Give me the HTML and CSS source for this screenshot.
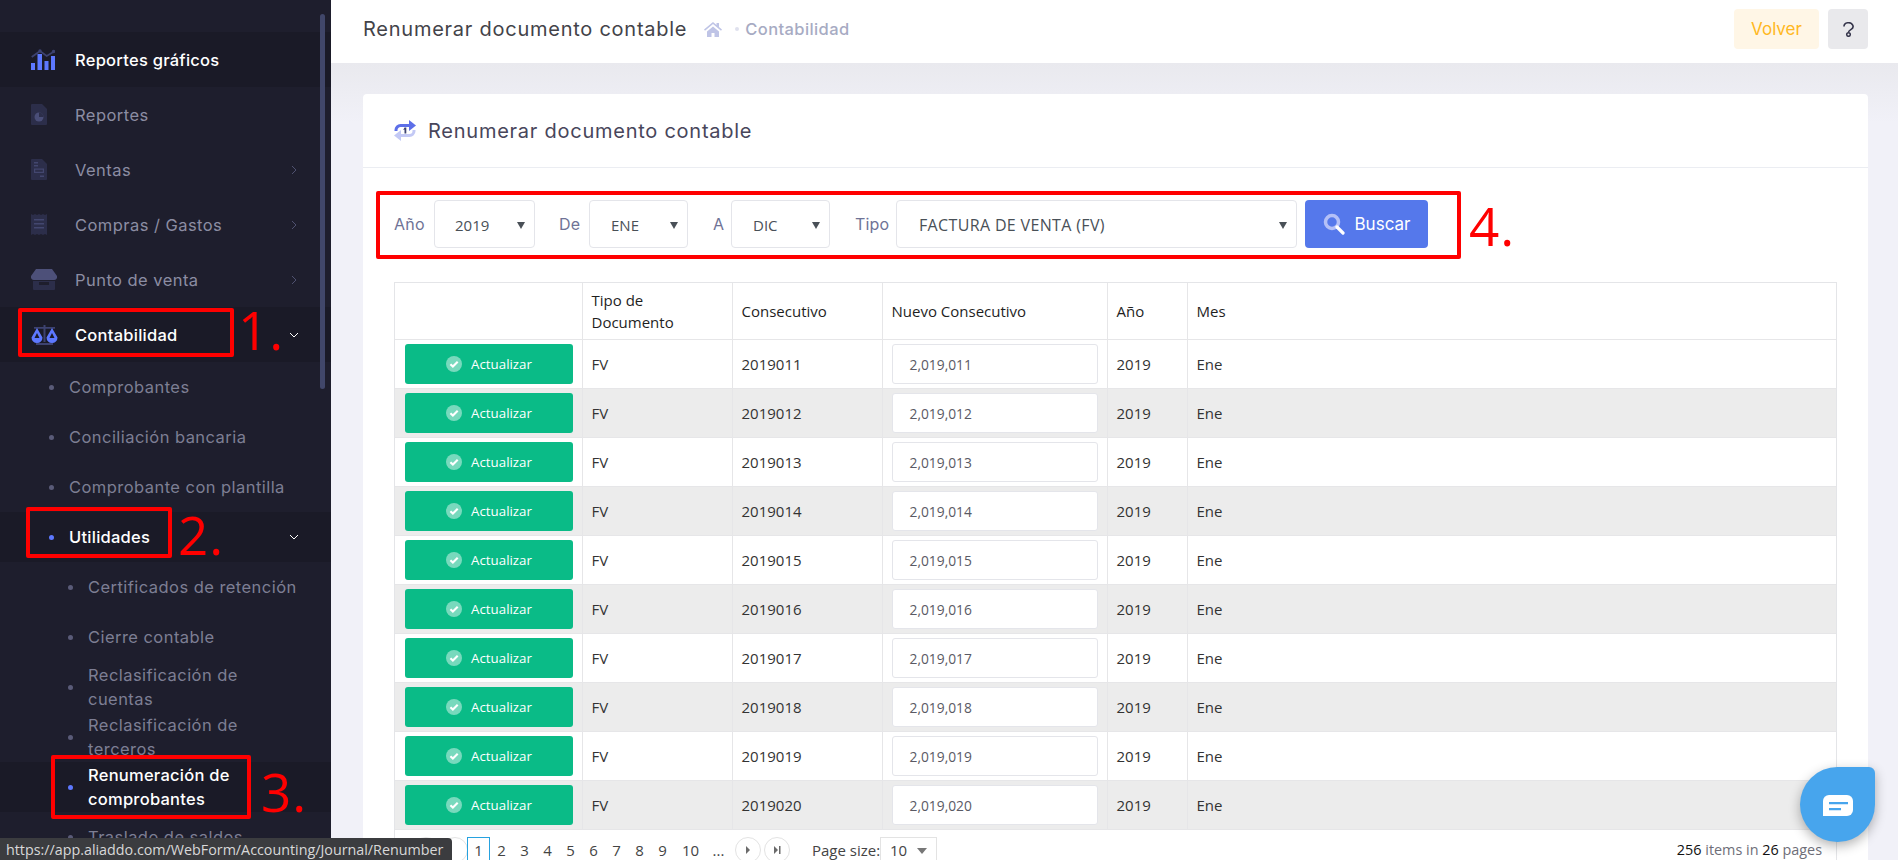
FILE: index.html
```html
<!DOCTYPE html>
<html lang="es">
<head>
<meta charset="utf-8">
<title>Renumerar documento contable</title>
<link rel="stylesheet" href="styles.css">
</head>
<body>
<svg class="sprites" width="0" height="0" aria-hidden="true">
  <symbol id="chev-r" viewBox="0 0 10 10"><path d="M3 1l4 4-4 4" fill="none" stroke="currentColor" stroke-width="1"/></symbol>
  <symbol id="chev-d" viewBox="0 0 10 10"><path d="M1 3l4 4 4-4" fill="none" stroke="currentColor" stroke-width="1"/></symbol>
  <symbol id="check" viewBox="0 0 16 16"><circle cx="8" cy="8" r="8" fill="#fff" fill-opacity=".45"/><path d="M4.400 8.200l2.500 2.400 4.800-4.800" fill="none" stroke="#fff" stroke-width="2.100"/></symbol>
</svg>
<div class="app">
  <aside class="sidebar">
    <div class="thumb"></div>
    <nav class="menu">
      <a class="item active">
        <span class="ico"><svg width="24" height="21" viewBox="0 0 24 21"><path d="M.7 8L9 2l6.700 5L24 2" fill="none" stroke="#3d4270" stroke-width="1.800"/><circle cx="9" cy="2" r="1.700" fill="#3d4270"/><circle cx="22.500" cy="2.500" r="1.700" fill="#3d4270"/><path d="M0 14h4v7H0zM6.500 5h4.500v16H6.500zM13.500 12h4v9h-4zM20 7h4v14h-4z" fill="#5d78ff"/></svg></span>
        <span class="lbl">Reportes gráficos</span>
      </a>
      <a class="item">
        <span class="ico"><svg width="16" height="21" viewBox="0 0 16 21"><path d="M1 0h10l5 5v15a1 1 0 0 1-1 1H1a1 1 0 0 1-1-1V1a1 1 0 0 1 1-1z" fill="#2c2e4a"/><circle cx="8" cy="13" r="4.500" fill="#4a4e78"/><path d="M8 13V8.500A4.500 4.500 0 0 1 12.500 13z" fill="#2c2e4a"/></svg></span>
        <span class="lbl">Reportes</span>
      </a>
      <a class="item">
        <span class="ico"><svg width="16" height="21" viewBox="0 0 16 21"><path d="M1 0h10l5 5v15a1 1 0 0 1-1 1H1a1 1 0 0 1-1-1V1a1 1 0 0 1 1-1z" fill="#2c2e4a"/><path d="M3 3h4v1.500H3zM3 6h4v1.500H3zM3 9.500h10v4.500H3zM9 16.500h4V18H9z" fill="#43476f"/><path d="M4.200 10.700h7.600v2.100H4.200z" fill="#2c2e4a"/></svg></span>
        <span class="lbl">Ventas</span>
        <svg class="chev dim" width="10" height="10"><use href="#chev-r"/></svg>
      </a>
      <a class="item">
        <span class="ico"><svg width="16" height="21" viewBox="0 0 16 21"><path d="M0 0l2 1 2-1 2 1 2-1 2 1 2-1 2 1 2-1v21l-2-1-2 1-2-1-2 1-2-1-2 1-2-1-2 1z" fill="#2c2e4a"/><path d="M3 5h10v1.400H3zM3 9h10v1.400H3zM3 13h10v1.400H3z" fill="#43476f"/></svg></span>
        <span class="lbl">Compras / Gastos</span>
        <svg class="chev dim" width="10" height="10"><use href="#chev-r"/></svg>
      </a>
      <a class="item">
        <span class="ico"><svg width="26" height="21" viewBox="0 0 26 21"><path d="M5 0h16l5 7v2a3 3 0 0 1-3 2H3a3 3 0 0 1-3-2V7z" fill="#4d5079"/><path d="M2 12h22v8a1 1 0 0 1-1 1H3a1 1 0 0 1-1-1zM8 13v3h10v-3z" fill="#2c2e4a" fill-rule="evenodd"/></svg></span>
        <span class="lbl">Punto de venta</span>
        <svg class="chev dim" width="10" height="10"><use href="#chev-r"/></svg>
      </a>
      <a class="item active">
        <span class="ico"><svg width="27" height="21" viewBox="0 0 27 21"><path d="M12.500 1h2v17h-2zM5 19h17v2H5zM3 3h21v1.800H3z" fill="#3d4270"/><path d="M6 4L.5 13.500a5.500 5.500 0 0 0 11 0zM6 9l-2.500 5h5z" fill="#5d78ff" fill-rule="evenodd"/><path d="M21 4l-5.500 9.500a5.500 5.500 0 0 0 11 0zM21 9l-2.500 5h5z" fill="#5d78ff" fill-rule="evenodd"/></svg></span>
        <span class="lbl">Contabilidad</span>
        <svg class="chev" width="10" height="10"><use href="#chev-d"/></svg>
      </a>
      <a class="sub"><i class="dot"></i><span>Comprobantes</span></a>
      <a class="sub"><i class="dot"></i><span>Conciliación bancaria</span></a>
      <a class="sub"><i class="dot"></i><span>Comprobante con plantilla</span></a>
      <a class="sub active"><i class="dot"></i><span>Utilidades</span><svg class="chev" width="10" height="10"><use href="#chev-d"/></svg></a>
      <a class="subsub"><i class="dot"></i><span>Certificados de retención</span></a>
      <a class="subsub"><i class="dot"></i><span>Cierre contable</span></a>
      <a class="subsub"><i class="dot"></i><span>Reclasificación de<br>cuentas</span></a>
      <a class="subsub"><i class="dot"></i><span>Reclasificación de<br>terceros</span></a>
      <a class="subsub active"><i class="dot"></i><span>Renumeración de<br>comprobantes</span></a>
      <a class="subsub"><i class="dot"></i><span>Traslado de saldos</span></a>
    </nav>
  </aside>

  <main class="main">
    <header class="topbar">
      <div class="crumbs">
        <h1 class="page-title">Renumerar documento contable</h1>
        <svg class="home" width="18" height="15" viewBox="0 0 18 15"><path d="M9 0L0 7.500l1 1.200L9 2l8 6.700 1-1.200-3-2.500V1h-2.500v2zM3 9.500V15h4.500v-4h3v4H15V9.500L9 4.500z" fill="#bfc4e6"/></svg>
        <i class="crumb-dot"></i>
        <span class="crumb">Contabilidad</span>
      </div>
      <div class="actions">
        <button class="btn-back">Volver</button>
        <button class="btn-help"><svg width="11" height="15" viewBox="0 0 11 15"><path d="M1 4.500a4.500 3.700 0 1 1 6.800 3.100C6.300 8.500 5.500 9 5.500 10.300" fill="none" stroke="#34344a" stroke-width="1.600"/><circle cx="5.500" cy="12.500" r="1.800" fill="none" stroke="#34344a" stroke-width="1.500"/></svg></button>
      </div>
    </header>

    <section class="content">
      <div class="card">
        <div class="card-head">
          <svg width="22" height="21" viewBox="0 0 22 21"><path d="M2 11V10a4.500 4.500 0 0 1 4.500-4.500H16" fill="none" stroke="#5d6fe8" stroke-width="3"/><path d="M15 0l7 5.500L15 11z" fill="#5d6fe8"/><path d="M20 10v1a4.500 4.500 0 0 1-4.500 4.500H6" fill="none" stroke="#c3c9f5" stroke-width="3"/><path d="M7 10l-7 5.500L7 21z" fill="#c3c9f5"/><path d="M10.500 7.500h1.800v6h-1.800V9.500l-1.300.6z" fill="#3d4270"/></svg>
          <h2 class="card-title">Renumerar documento contable</h2>
        </div>
        <div class="card-body">
          <div class="filters">
            <label class="flabel w-ano">Año</label>
            <div class="select s-ano"><span>2019</span><i class="tri"></i></div>
            <label class="flabel w-de">De</label>
            <div class="select s-mes"><span>ENE</span><i class="tri"></i></div>
            <label class="flabel w-a">A</label>
            <div class="select s-mes2"><span>DIC</span><i class="tri"></i></div>
            <label class="flabel w-tipo">Tipo</label>
            <div class="select s-tipo"><span>FACTURA DE VENTA (FV)</span><i class="tri"></i></div>
            <button class="btn-search"><svg width="22" height="22" viewBox="0 0 22 22"><circle cx="9" cy="9" r="6.500" fill="none" stroke="#b4c0f7" stroke-width="3.500"/><path d="M14 14l6 6" stroke="#fff" stroke-width="3.200" stroke-linecap="round"/></svg><span>Buscar</span></button>
          </div>
          <div class="grid-wrap">
            <table class="grid">
              <colgroup><col class="c1"><col class="c2"><col class="c3"><col class="c4"><col class="c5"><col></colgroup>
              <thead><tr><th></th><th>Tipo de Documento</th><th>Consecutivo</th><th>Nuevo Consecutivo</th><th>Año</th><th>Mes</th></tr></thead>
              <tbody>
                <tr><td class="act"><button class="btn-up"><svg width="16" height="16"><use href="#check"/></svg>Actualizar</button></td><td>FV</td><td>2019011</td><td class="inp"><div class="num">2,019,011</div></td><td>2019</td><td>Ene</td></tr>
                <tr><td class="act"><button class="btn-up"><svg width="16" height="16"><use href="#check"/></svg>Actualizar</button></td><td>FV</td><td>2019012</td><td class="inp"><div class="num">2,019,012</div></td><td>2019</td><td>Ene</td></tr>
                <tr><td class="act"><button class="btn-up"><svg width="16" height="16"><use href="#check"/></svg>Actualizar</button></td><td>FV</td><td>2019013</td><td class="inp"><div class="num">2,019,013</div></td><td>2019</td><td>Ene</td></tr>
                <tr><td class="act"><button class="btn-up"><svg width="16" height="16"><use href="#check"/></svg>Actualizar</button></td><td>FV</td><td>2019014</td><td class="inp"><div class="num">2,019,014</div></td><td>2019</td><td>Ene</td></tr>
                <tr><td class="act"><button class="btn-up"><svg width="16" height="16"><use href="#check"/></svg>Actualizar</button></td><td>FV</td><td>2019015</td><td class="inp"><div class="num">2,019,015</div></td><td>2019</td><td>Ene</td></tr>
                <tr><td class="act"><button class="btn-up"><svg width="16" height="16"><use href="#check"/></svg>Actualizar</button></td><td>FV</td><td>2019016</td><td class="inp"><div class="num">2,019,016</div></td><td>2019</td><td>Ene</td></tr>
                <tr><td class="act"><button class="btn-up"><svg width="16" height="16"><use href="#check"/></svg>Actualizar</button></td><td>FV</td><td>2019017</td><td class="inp"><div class="num">2,019,017</div></td><td>2019</td><td>Ene</td></tr>
                <tr><td class="act"><button class="btn-up"><svg width="16" height="16"><use href="#check"/></svg>Actualizar</button></td><td>FV</td><td>2019018</td><td class="inp"><div class="num">2,019,018</div></td><td>2019</td><td>Ene</td></tr>
                <tr><td class="act"><button class="btn-up"><svg width="16" height="16"><use href="#check"/></svg>Actualizar</button></td><td>FV</td><td>2019019</td><td class="inp"><div class="num">2,019,019</div></td><td>2019</td><td>Ene</td></tr>
                <tr><td class="act"><button class="btn-up"><svg width="16" height="16"><use href="#check"/></svg>Actualizar</button></td><td>FV</td><td>2019020</td><td class="inp"><div class="num">2,019,020</div></td><td>2019</td><td>Ene</td></tr>
              </tbody>
            </table>
            <div class="pager">
              <span class="circle"></span><span class="circle"></span>
              <div class="pages">
                <span class="pg cur">1</span><span class="pg">2</span><span class="pg">3</span><span class="pg">4</span><span class="pg">5</span><span class="pg">6</span><span class="pg">7</span><span class="pg">8</span><span class="pg">9</span><span class="pg wide">10</span><span class="pg">...</span>
              </div>
              <span class="circle"><svg width="10" height="10" viewBox="0 0 10 10"><path d="M3 1l4 4-4 4z" fill="#6b6b6b"/></svg></span>
              <span class="circle"><svg width="10" height="10" viewBox="0 0 10 10"><path d="M2 1l4 4-4 4zM7 1h1.500v8H7z" fill="#6b6b6b"/></svg></span>
              <span class="psize">Page size:</span>
              <div class="psel"><span>10</span><i class="tri2"></i></div>
              <span class="pinfo"><b>256</b> items in <b>26</b> pages</span>
            </div>
          </div>
        </div>
      </div>
    </section>
  </main>

  <div class="mark m1"></div><span class="num-mark n1">1.</span>
  <div class="mark m2"></div><span class="num-mark n2">2.</span>
  <div class="mark m3"></div><span class="num-mark n3">3.</span>
  <div class="mark m4"></div><span class="num-mark n4">4.</span>

  <div class="status">https://app.aliaddo.com/WebForm/Accounting/Journal/Renumber</div>
  <div class="chat"><svg width="30" height="22" viewBox="0 0 30 22"><path d="M6 0h18a6 6 0 0 1 6 6v9a6 6 0 0 1-6 6H0V6a6 6 0 0 1 6-6z" fill="#fff"/><path d="M6 7h19v2.200H6zM6 13h12v2.200H6z" fill="#47a5ed"/></svg></div>
</div>
</body>
</html>
```

FILE: styles.css
```css
* { box-sizing: border-box; }
html, body { margin: 0; height: 100%; overflow: hidden; }
body { font-family: Inter, "Noto Sans", sans-serif; color: #48465b; }
.sprites { position: absolute; }
.app { position: relative; display: flex; width: 1898px; height: 860px; overflow: hidden; }
h1, h2 { margin: 0; font-weight: 400; }
button { font-family: inherit; border: 0; cursor: pointer; }

/* Sidebar */
.sidebar { position: relative; flex: 0 0 331px; height: 860px; background: #1e1e2d; overflow: hidden; padding-top: 32px; }
.thumb { position: absolute; left: 320px; top: 14px; width: 5px; height: 375px; border-radius: 3px; background: #41476a; }
.menu a { display: flex; align-items: center; }
.item { height: 55px; padding: 0 32px 0 31px; font-size: 16.500px; letter-spacing: .45px; color: #8c8da3; }
.ico { flex: 0 0 44px; display: flex; align-items: center; }
.lbl { flex: 1; }
.item.active { background: #1a1a27; color: #fff; font-weight: 500; letter-spacing: .25px; }
.chev { flex: none; color: #fff; }
.chev.dim { color: #4f5170; }
.sub, .subsub { height: 50px; line-height: 24px; font-size: 16.500px; letter-spacing: .45px; color: #7d7e94; white-space: nowrap; }
.sub { padding: 0 32px 0 49px; }
.sub span { flex: 1; }
.subsub { padding: 0 30px 0 68px; }
.dot { flex: none; width: 5px; height: 5px; border-radius: 50%; background: #5a5b78; margin-right: 15px; }
.sub.active, .subsub.active { background: #1a1a27; color: #fff; font-weight: 500; letter-spacing: .25px; }
.active .dot { background: #5d78ff; }

/* Main */
.main { flex: 1; min-width: 0; display: flex; flex-direction: column; background: #f1f1f8; }
.topbar { flex: 0 0 63px; display: flex; align-items: center; justify-content: space-between; padding: 0 30px 5px 32px; background: #fff; }
.crumbs { display: flex; align-items: center; }
.page-title { font-size: 20px; letter-spacing: .75px; color: #434349; margin-right: 17px; white-space: nowrap; }
.home { margin-right: 13px; }
.crumb-dot { width: 4px; height: 4px; border-radius: 50%; background: #dfe1ee; margin-right: 6px; }
.crumb { font-size: 16.500px; font-weight: 500; color: #a7abc3; letter-spacing: .4px; }
.actions { display: flex; gap: 9px; }
.btn-back { width: 85px; height: 40px; border-radius: 4px; background: #fff6e6; color: #ffb822; font-size: 17px; }
.btn-help { width: 40px; height: 40px; border-radius: 4px; background: #e9e9ec; display: flex; align-items: center; justify-content: center; }
.content { flex: 1; min-height: 0; padding: 31px 30px 0 32px; background: linear-gradient(#e9e9ee, #f1f1f8 60px); overflow: hidden; }
.card { height: 800px; background: #fff; border-radius: 4px; }
.card-head { height: 74px; display: flex; align-items: center; gap: 12px; padding-left: 31px; border-bottom: 1px solid #ebedf2; }
.card-title { font-size: 20px; letter-spacing: .75px; color: #48465b; white-space: nowrap; }
.card-body { padding: 32px 31px 0; }

/* Filters */
.filters { display: flex; align-items: center; height: 48px; }
.flabel { font-size: 16px; color: #6f7396; letter-spacing: .2px; }
.w-ano { width: 40px; }
.w-de { width: 30px; margin-left: 24px; }
.w-a { width: 18px; margin-left: 25px; }
.w-tipo { width: 41px; margin-left: 25px; }
.select { position: relative; height: 48px; display: flex; align-items: center; border: 1px solid #e4e5ea; border-radius: 4px; background: #fff; font-family: "Open Sans", sans-serif; font-size: 15px; color: #495057; padding: 2px 0 0 20px; }
.s-ano { width: 101px; }
.s-mes { width: 99px; padding-left: 21px; }
.s-mes2 { width: 99px; padding-left: 21px; }
.s-tipo { width: 401px; padding-left: 22px; font-size: 16px; letter-spacing: .35px; }
.tri { position: absolute; right: 9px; top: 21px; width: 0; height: 0; border-left: 4px solid transparent; border-right: 4px solid transparent; border-top: 7px solid #495057; }
.btn-search { margin-left: 8px; width: 123px; height: 48px; border-radius: 4px; background: #5578eb; color: #fff; font-size: 17px; display: flex; align-items: center; justify-content: center; gap: 10px; }

/* Table */
.grid-wrap { margin-top: 34px; border: 1px solid #e4e5e8; border-bottom: 0; height: 600px; }
.grid { width: 100%; border-collapse: collapse; table-layout: fixed; font-family: "Open Sans", sans-serif; font-size: 15px; color: #333; }
.c1 { width: 187px; }
.c2 { width: 150px; }
.c3 { width: 150px; }
.c4 { width: 225px; }
.c5 { width: 80px; }
.grid th, .grid td { border: 1px solid #e6e6e8; padding: 0 9px; text-align: left; font-weight: 400; }
.grid tr > :first-child { border-left: 0; }
.grid tr > :last-child { border-right: 0; }
.grid thead tr > * { border-top: 0; }
.grid th { height: 56px; line-height: 22px; color: #1f1f1f; }
.grid td { height: 49px; }
.grid tbody tr:nth-child(even) td { background: #ececec; }
.grid td.act { padding: 0 9px 0 10px; }
.btn-up { width: 168px; height: 40px; border-radius: 3px; background: #0abb87; color: #fff; font-family: "Open Sans", sans-serif; font-size: 13.300px; display: flex; align-items: center; justify-content: center; gap: 9px; }
.grid td.inp { padding: 0 9px 0 9px; }
.num { height: 40px; line-height: 40px; padding-left: 17px; background: #fff; border: 1px solid #e4e5ea; border-radius: 3px; font-size: 13.800px; color: #5a5a64; }

/* Pager */
.pager { display: flex; align-items: flex-start; height: 24px; margin-top: 7px; padding-left: 18px; font-family: "Open Sans", sans-serif; font-size: 15px; color: #444; }
.circle { flex: none; width: 26px; height: 26px; border-radius: 50%; border: 1px solid #e3e3e3; margin-right: 3px; display: flex; align-items: center; justify-content: center; }
.pages { display: flex; margin-left: -6px; padding-left: 2px; margin-right: 5px; }
.pg { width: 23px; height: 24px; text-align: center; padding-top: 2px; line-height: 22px; }
.pg.wide { width: 33px; }
.pg.cur { border: 1px solid #27a2df; border-bottom: 0; padding-top: 1px; }
.psize { margin-left: 19px; width: 68px; white-space: nowrap; padding-top: 2px; line-height: 22px; }
.psel { width: 57px; height: 24px; line-height: 22px; border: 1px solid #e3e3e3; border-bottom: 0; display: flex; align-items: flex-start; justify-content: space-between; padding: 1px 9px 0; }
.tri2 { width: 0; height: 0; margin-top: 9px; border-left: 5px solid transparent; border-right: 5px solid transparent; border-top: 6px solid #777; }
.pinfo { margin-left: auto; margin-right: 14px; padding-top: 2px; line-height: 22px; font-size: 14.400px; color: #6e6e78; }
.pinfo b { font-weight: 400; color: #111; }

/* Overlays */
.mark { position: absolute; border: 4px solid #f00; border-radius: 2px; }
.m1 { left: 18px; top: 308px; width: 216px; height: 49px; }
.m2 { left: 26px; top: 507px; width: 146px; height: 51px; }
.m3 { left: 51px; top: 755px; width: 200px; height: 64px; }
.m4 { left: 376px; top: 191px; width: 1085px; height: 68px; }
.num-mark { position: absolute; font-family: "Open Sans", sans-serif; font-size: 53px; line-height: 60px; color: #f00; letter-spacing: 1px; }
.n1 { left: 238px; top: 300px; }
.n2 { left: 178px; top: 505px; }
.n3 { left: 261px; top: 762px; }
.n4 { left: 1469px; top: 196px; }
.status { position: absolute; left: 0; top: 838px; width: 452px; height: 22px; padding-left: 6px; line-height: 23px; background: #3b3c3f; color: #d8d8d8; font-family: "Open Sans", sans-serif; font-size: 14.300px; white-space: nowrap; border-top-right-radius: 4px; }
.chat { position: absolute; left: 1800px; top: 767px; width: 75px; height: 75px; border-radius: 50% 6px 50% 50%; background: #47a5ed; box-shadow: 0 4px 12px rgba(0,0,0,.3); display: flex; align-items: center; justify-content: center; padding-top: 2px; }
```
